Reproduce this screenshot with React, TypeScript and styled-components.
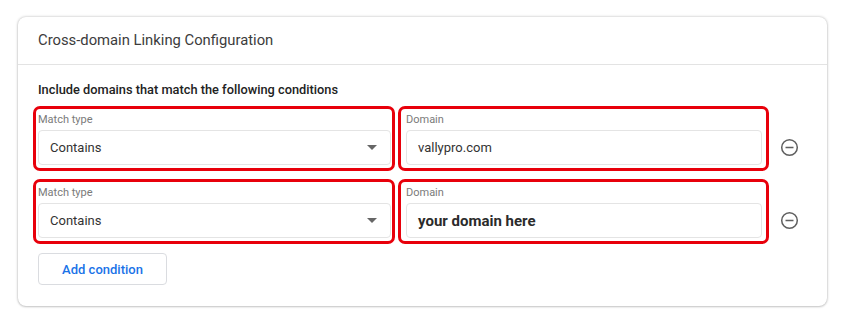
import React from "react";
import styled, { createGlobalStyle } from "styled-components";

const GlobalStyle = createGlobalStyle`
  body {
    margin: 0;
    background: #ffffff;
    font-family: Roboto, "Liberation Sans", Arial, sans-serif;
  }
`;

const Page = styled.div`
  padding: 17px 18px 18px 18px;
`;

const Card = styled.div`
  width: 809px;
  height: 289px;
  box-sizing: border-box;
  background: #ffffff;
  border-radius: 8px;
  box-shadow: 0 0 3px rgba(0, 0, 0, 0.28), 0 1px 2px rgba(0, 0, 0, 0.12);
  display: flex;
  flex-direction: column;
`;

const Header = styled.div`
  height: 48px;
  box-sizing: border-box;
  display: flex;
  align-items: center;
  padding: 0 20px 1px;
  border-bottom: 1px solid #e3e3e3;
  font-size: 14.8px;
  color: #3c3c3c;
`;

const Body = styled.div`
  padding: 17px 20px 0 15px;
  display: flex;
  flex-direction: column;
`;

const Heading = styled.div`
  padding-left: 5px;
  font-size: 12.8px;
  font-weight: 500;
  color: #222;
  line-height: 16px;
  margin-bottom: 8px;
`;

const Rows = styled.div`
  display: flex;
  flex-direction: column;
  gap: 8px;
`;

const Row = styled.div`
  display: flex;
  align-items: flex-end;
`;

const Highlight = styled.div<{ $width: number; $pad: number }>`
  width: ${({ $width }) => $width}px;
  box-sizing: border-box;
  border: 3px solid #e8000b;
  border-radius: 7px;
  padding: 4px ${({ $pad }) => $pad - 1}px 3px ${({ $pad }) => $pad}px;
  margin-right: 3px;
`;

const Label = styled.div`
  font-size: 11px;
  color: #7a7a7a;
  line-height: 14px;
  margin-bottom: 3px;
`;

const Field = styled.div<{ $strong?: boolean }>`
  height: 35px;
  box-sizing: border-box;
  border: 1px solid #e4e4e4;
  border-radius: 4px;
  display: flex;
  align-items: center;
  justify-content: space-between;
  padding: 0 12px 0 11px;
  font-size: ${({ $strong }) => ($strong ? "15px" : "13px")};
  font-weight: ${({ $strong }) => ($strong ? 700 : 400)};
  color: ${({ $strong }) => ($strong ? "#2b2b2b" : "#333")};
`;

const Caret = styled.span`
  width: 0;
  height: 0;
  border-left: 5px solid transparent;
  border-right: 5px solid transparent;
  border-top: 5px solid #666;
  margin-right: 1px;
`;

const RemoveButton = styled.div`
  width: 20px;
  height: 20px;
  margin: 0 0 14px 7px;
  display: flex;
  align-items: center;
  justify-content: center;
  color: #5f5f5f;
`;

const AddButton = styled.button`
  margin: 9px 0 0 5px;
  width: 129px;
  height: 32px;
  border: 1px solid #dadce0;
  border-radius: 4px;
  background: #ffffff;
  color: #1a73e8;
  font-family: Roboto, "Liberation Sans", Arial, sans-serif;
  font-size: 13px;
  font-weight: 500;
  cursor: pointer;
`;

const MinusCircle = () => (
  <svg width="19" height="19" viewBox="0 0 20 20" fill="none">
    <circle cx="10" cy="10" r="8.2" stroke="currentColor" strokeWidth="1.6" />
    <line x1="5.8" y1="10" x2="14.2" y2="10" stroke="currentColor" strokeWidth="1.6" />
  </svg>
);

const conditions = [
  { match: "Contains", domain: "vallypro.com", placeholder: false },
  { match: "Contains", domain: "your domain here", placeholder: true },
];

const App: React.FunctionComponent = () => {
  return (
    <Page>
      <GlobalStyle />
      <Card>
        <Header>Cross-domain Linking Configuration</Header>
        <Body>
          <Heading>Include domains that match the following conditions</Heading>
          <Rows>
            {conditions.map((item, index) => (
              <Row key={index}>
                <Highlight $width={362} $pad={2}>
                  <Label>Match type</Label>
                  <Field>
                    {item.match}
                    <Caret />
                  </Field>
                </Highlight>
                <Highlight $width={371} $pad={5}>
                  <Label>Domain</Label>
                  <Field $strong={item.placeholder}>{item.domain}</Field>
                </Highlight>
                <RemoveButton>
                  <MinusCircle />
                </RemoveButton>
              </Row>
            ))}
          </Rows>
          <AddButton>Add condition</AddButton>
        </Body>
      </Card>
    </Page>
  );
};

export default App;
